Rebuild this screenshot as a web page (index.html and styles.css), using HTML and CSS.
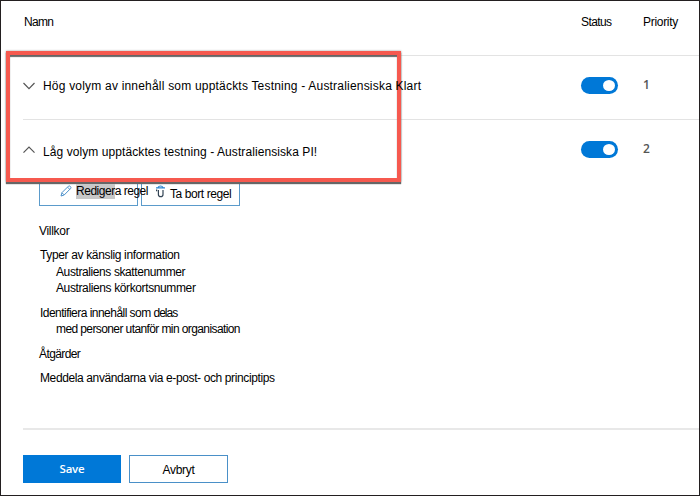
FILE: index.html
```
<!DOCTYPE html>
<html lang="sv">
<head>
<meta charset="utf-8">
<title>Regler</title>
<link rel="stylesheet" href="styles.css">
</head>
<body>
<main class="page">
  <header class="row head">
    <span class="name"><span class="t-namn">Namn</span></span>
    <span class="status t-status">Status</span>
    <span class="priority t-priority">Priority</span>
  </header>
  <section class="row rule">
    <div class="name">
      <svg class="chevron" viewBox="0 0 14 10"><path d="M1.5 2 7 7.6 12.5 2"/></svg>
      <span class="title t-high">Hög volym av innehåll som upptäckts Testning - Australiensiska Klart</span>
    </div>
    <div class="status"><span class="toggle"></span></div>
    <span class="priority num">1</span>
  </section>
  <section class="row rule second">
    <div class="name">
      <svg class="chevron" viewBox="0 0 14 10"><path d="M1.5 7.6 7 2 12.5 7.6"/></svg>
      <span class="title low t-low">Låg volym upptäcktes testning - Australiensiska PI!</span>
    </div>
    <div class="status"><span class="toggle"></span></div>
    <span class="priority num">2</span>
  </section>
  <section class="details">
    <div class="actions">
      <button class="action edit">
        <svg class="pencil" viewBox="0 0 12 12"><path d="M1 11 2 7.6 8.5 1.1Q9.3.5 10.3 1.4 11.4 2.5 10.7 3.4L4.2 10ZM7.6 2.2 9.7 4.3M2 7.8 4 9.8"/></svg>
        <span class="t-edit"><mark>Rediger</mark>a regel</span>
      </button>
      <button class="action delete">
        <svg class="trash" viewBox="0 0 11 13"><path class="lid" d="M1 2.8H10M3 2.4Q3.7 1 5.5 1T8 2.4"/><path class="can" d="M1.6 4.6V6.2M3.4 5V9.4Q3.4 11.6 5.7 11.6T8 9.4V5"/></svg>
        <span class="t-delete">Ta bort regel</span>
      </button>
    </div>
    <p class="villkor"><span class="t-villkor">Villkor</span></p>
    <p class="types"><span class="t-types">Typer av känslig information</span></p>
    <p class="sub"><span class="t-tax">Australiens skattenummer</span></p>
    <p class="sub"><span class="t-lic">Australiens körkortsnummer</span></p>
    <p class="identify"><span class="t-ident">Identifiera innehåll som <span class="tight">delas</span></span></p>
    <p class="sub"><span class="t-people">med personer utanför min organisation</span></p>
    <p class="atgarder"><span class="t-atg">Åtgärder</span></p>
    <p class="notify"><span class="t-notify">Meddela användarna via e-post- och principtips</span></p>
  </section>
  <footer class="footer">
    <button class="btn save">Save</button>
    <button class="btn cancel"><span class="t-cancel">Avbryt</span></button>
  </footer>
  <div class="highlight"></div>
</main>
</body>
</html>
```
FILE: styles.css
```
* { box-sizing: border-box; }
body { margin: 0; background: #fff; }
.page {
  position: relative;
  width: 700px;
  height: 496px;
  border: 1px solid #231f20;
  padding-left: 22px;
  overflow: hidden;
  display: flex;
  flex-direction: column;
  font: 12px/16px "Liberation Sans", Arial, sans-serif;
  color: #000;
  white-space: nowrap;
}
p { margin: 0; }
.row { display: flex; height: 64px; flex: none; align-items: center; border-bottom: 1px solid #e3e3e3; }
.head { height: 55px; padding-bottom: 13px; }
.name { width: 558px; display: flex; align-items: center; padding-left: 1px; }
.status { width: 62px; }
.num { font: 600 12px/16px "Open Sans", sans-serif; color: #555; }
.rule { padding-bottom: 5px; }
.rule .name { position: relative; top: 1px; z-index: 2; }
.second { height: 60px; border-bottom: 0; padding-bottom: 2px; }
.chevron { width: 14px; height: 10px; margin-left: -2px; margin-right: 7px; fill: none; stroke: #555; stroke-width: 1.2; }
.title { position: relative; }
.low { top: 2px; }
.toggle { display: block; position: relative; width: 37px; height: 17px; border-radius: 9px; background: #0078d7; }
.toggle::after { content: ""; position: absolute; right: 3px; top: 3px; width: 12px; height: 11px; border-radius: 50%; background: #fff; }
.details { padding-left: 16px; height: 248px; flex: none; }
.actions { display: flex; gap: 3px; height: 25px; }
button { margin: 0; font: inherit; color: inherit; }
.action { display: flex; height: 26px; width: 99px; padding: 0; border: 1px solid #5b9bcb; background: #fff; }
.edit { padding: 2px 0 0 20px; }
.delete { padding: 5px 0 0 13px; }
.action span { flex: none; position: relative; z-index: 2; }
mark { background: #c8c8c8; color: inherit; padding-bottom: 1px; }
.pencil { flex: none; width: 12px; height: 12px; margin: 2px 4px 0 0; fill: none; stroke: #4c91cb; stroke-width: 1; }
.trash { flex: none; width: 11px; height: 13px; margin: -1px 4px 0 0; fill: none; stroke-width: 1.2; }
.lid { stroke: #2e86d0; }
.can { stroke: #345; }
.villkor { margin-top: 18px; }
.types { margin-top: 8px; padding-left: 1px; }
.types + .sub { margin-top: 1px; }
.sub { padding-left: 17px; }
.identify { margin-top: 9px; padding-left: 1px; }
.atgarder { margin-top: 9px; }
.notify { margin-top: 8px; padding-left: 1px; }
.footer { border-top: 2px solid #e8e8e8; padding-top: 25px; display: flex; gap: 8px; }
.btn { width: 98px; height: 28px; padding: 0; border: 1px solid #4a90c8; background: #fff; }
.save { background: #0078d7; border-color: #0078d7; color: #fff; font: 600 11.5px/16px "Open Sans", sans-serif; letter-spacing: -.2px; }
.cancel { width: 99px; padding-top: 2px; }
.highlight { position: absolute; z-index: 1; left: 5px; top: 50px; width: 395px; height: 131px; border: 4px solid #f6594f; box-shadow: 0 2px 1px #666, 0 0 2px #999, inset 0 2px 1px #666; }

/* Tracking per label */
.t-namn { letter-spacing: -.7px; }
.t-status { letter-spacing: -.6px; }
.t-priority { letter-spacing: -.3px; }
.t-high { letter-spacing: .2px; }
.t-low { letter-spacing: .08px; }
.t-edit { letter-spacing: -.48px; }
.t-delete { letter-spacing: -.42px; }
.t-villkor { letter-spacing: -.3px; }
.t-types { letter-spacing: -.35px; }
.t-tax { letter-spacing: -.4px; }
.t-lic { letter-spacing: -.38px; }
.t-ident { letter-spacing: -.53px; }
.tight { letter-spacing: -1px; }
.t-people { letter-spacing: -.6px; }
.t-atg { letter-spacing: -.6px; }
.t-notify { letter-spacing: -.38px; }
.t-cancel { letter-spacing: -.3px; }
```
